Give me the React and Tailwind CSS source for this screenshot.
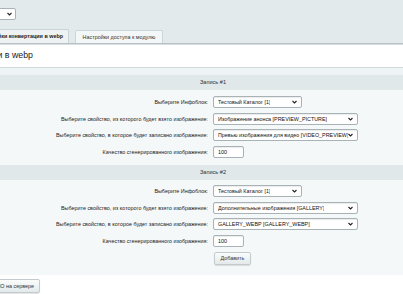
import React from "react";

const font = { fontFamily: '"Liberation Sans", Arial, sans-serif' };

function Chevron() {
    return (
        <svg width="5" height="4" viewBox="0 0 10 7" className="shrink-0">
            <path d="M1 1.5l4 4 4-4" fill="none" stroke="#222" strokeWidth="2.2" />
        </svg>
    );
}

function Select({ value, wide }) {
    return (
        <div
            className={`flex items-center justify-between h-[12px] ${wide ? "w-[145px]" : "w-[89px]"} bg-white border border-[#a8b3b8] rounded-[2px] pl-[4px] pr-[4px] text-[5.4px] text-[#111] shadow-[inset_0_1px_1px_rgba(0,0,0,0.08)]`}
        >
            <span className="whitespace-nowrap overflow-hidden">{value}</span>
            <Chevron />
        </div>
    );
}

function Row({ label, children }) {
    return (
        <div className="flex items-center h-[16.5px]">
            <div className="w-[208px] text-right text-[5.4px] text-[#222] whitespace-nowrap">{label}</div>
            <div className="ml-[5px] flex items-center">{children}</div>
        </div>
    );
}

function Input({ value }) {
    return (
        <div className="h-[12px] w-[31px] bg-white border border-[#a8b3b8] rounded-[2px] pl-[4px] text-[5.4px] text-[#111] flex items-center shadow-[inset_0_1px_1px_rgba(0,0,0,0.08)]">
            {value}
        </div>
    );
}

function Section({ title, children, pt }) {
    return (
        <div>
            <div className="h-[15px] bg-[#e0e8ea] flex items-center justify-center text-[5.6px] text-[#333]">
                {title}
            </div>
            <div className={pt}>{children}</div>
        </div>
    );
}

export default function App() {
    return (
        <div className="w-[403px] h-[294px] overflow-hidden bg-white" style={font}>
            <div className="w-[426px]">
                {/* top strip with tabs */}
                <div className="bg-[#e2eaec] h-[43px] flex flex-col">
                    <div className="pt-[8px] h-[30px]">
                        <div className="flex items-center justify-end h-[12px] w-[40px] -ml-[24px] bg-white border border-[#a8b3b8] rounded-[2px] pr-[3px]">
                            <Chevron />
                        </div>
                    </div>
                    <div className="flex items-end h-[13px]">
                        <div className="h-[14px] w-[121px] -ml-[52px] flex items-center justify-end pr-[5px] bg-[#eef2f3] border-r border-t border-[#c9d2d5] rounded-t-[2px] text-[5.4px] font-bold text-[#222] whitespace-nowrap">
                            Настройки конвертации в webp
                        </div>
                        <div className="h-[13px] ml-[6px] w-[88px] flex items-center justify-center bg-[#f4f7f8] border border-b-0 border-[#cdd5d8] rounded-t-[2px] text-[5.4px] text-[#333] whitespace-nowrap">
                            Настройки доступа к модулю
                        </div>
                    </div>
                </div>
                <div className="h-[1px] bg-[#b8c2c6]" />
                <div className="h-[1px] bg-[#d8dfe2]" />

                {/* title */}
                <div className="h-[23px] bg-white flex items-center border-b border-[#d0d8db]">
                    <div className="w-[200px] -ml-[167px] text-right text-[8.8px] text-[#222] whitespace-nowrap">
                        Настройки конвертации в webp
                    </div>
                </div>
                <div className="h-[7px] bg-[#eef3f5]" />

                {/* form panel */}
                <div className="bg-[#f5f8f9] pb-[10px]">
                    <Section title="Запись #1" pt="pt-[4px]">
                        <Row label="Выберите Инфоблок:">
                            <Select value="Тестовый Каталог [1]" />
                        </Row>
                        <Row label="Выберите свойство, из которого будет взято изображение:">
                            <Select wide value="Изображение анонса [PREVIEW_PICTURE]" />
                        </Row>
                        <Row label="Выберите свойство, в которое будет записано изображение:">
                            <Select wide value="Превью изображения для видео [VIDEO_PREVIEW]" />
                        </Row>
                        <Row label="Качество сгенерированного изображения:">
                            <Input value="100" />
                        </Row>
                    </Section>
                    <div className="h-[5px]" />
                    <Section title="Запись #2" pt="pt-[3px]">
                        <Row label="Выберите Инфоблок:">
                            <Select value="Тестовый Каталог [1]" />
                        </Row>
                        <Row label="Выберите свойство, из которого будет взято изображение:">
                            <Select wide value="Дополнительные изображения [GALLERY]" />
                        </Row>
                        <Row label="Выберите свойство, в которое будет записано изображение:">
                            <Select wide value="GALLERY_WEBP [GALLERY_WEBP]" />
                        </Row>
                        <Row label="Качество сгенерированного изображения:">
                            <Input value="100" />
                        </Row>
                        <div className="pl-[214px] pt-[3px]">
                            <div className="h-[13px] w-[37px] flex items-center justify-center rounded-[2px] border border-[#c3cbce] bg-gradient-to-b from-[#fbfcfc] to-[#e3e9ea] shadow-[0_1px_1px_rgba(0,0,0,0.12)] text-[5.4px] text-[#333]">
                                Добавить
                            </div>
                        </div>
                    </Section>
                </div>

                {/* bottom button */}
                <div className="pt-[4px]">
                    <div className="h-[14px] w-[70px] -ml-[30px] flex items-center justify-end pr-[5px] rounded-[2px] border border-[#c3cbce] bg-gradient-to-b from-[#fbfcfc] to-[#e3e9ea] shadow-[0_1px_1px_rgba(0,0,0,0.12)] text-[5.4px] text-[#333] whitespace-nowrap">
                        Инфо о ПО на сервере
                    </div>
                </div>
            </div>
        </div>
    );
}
